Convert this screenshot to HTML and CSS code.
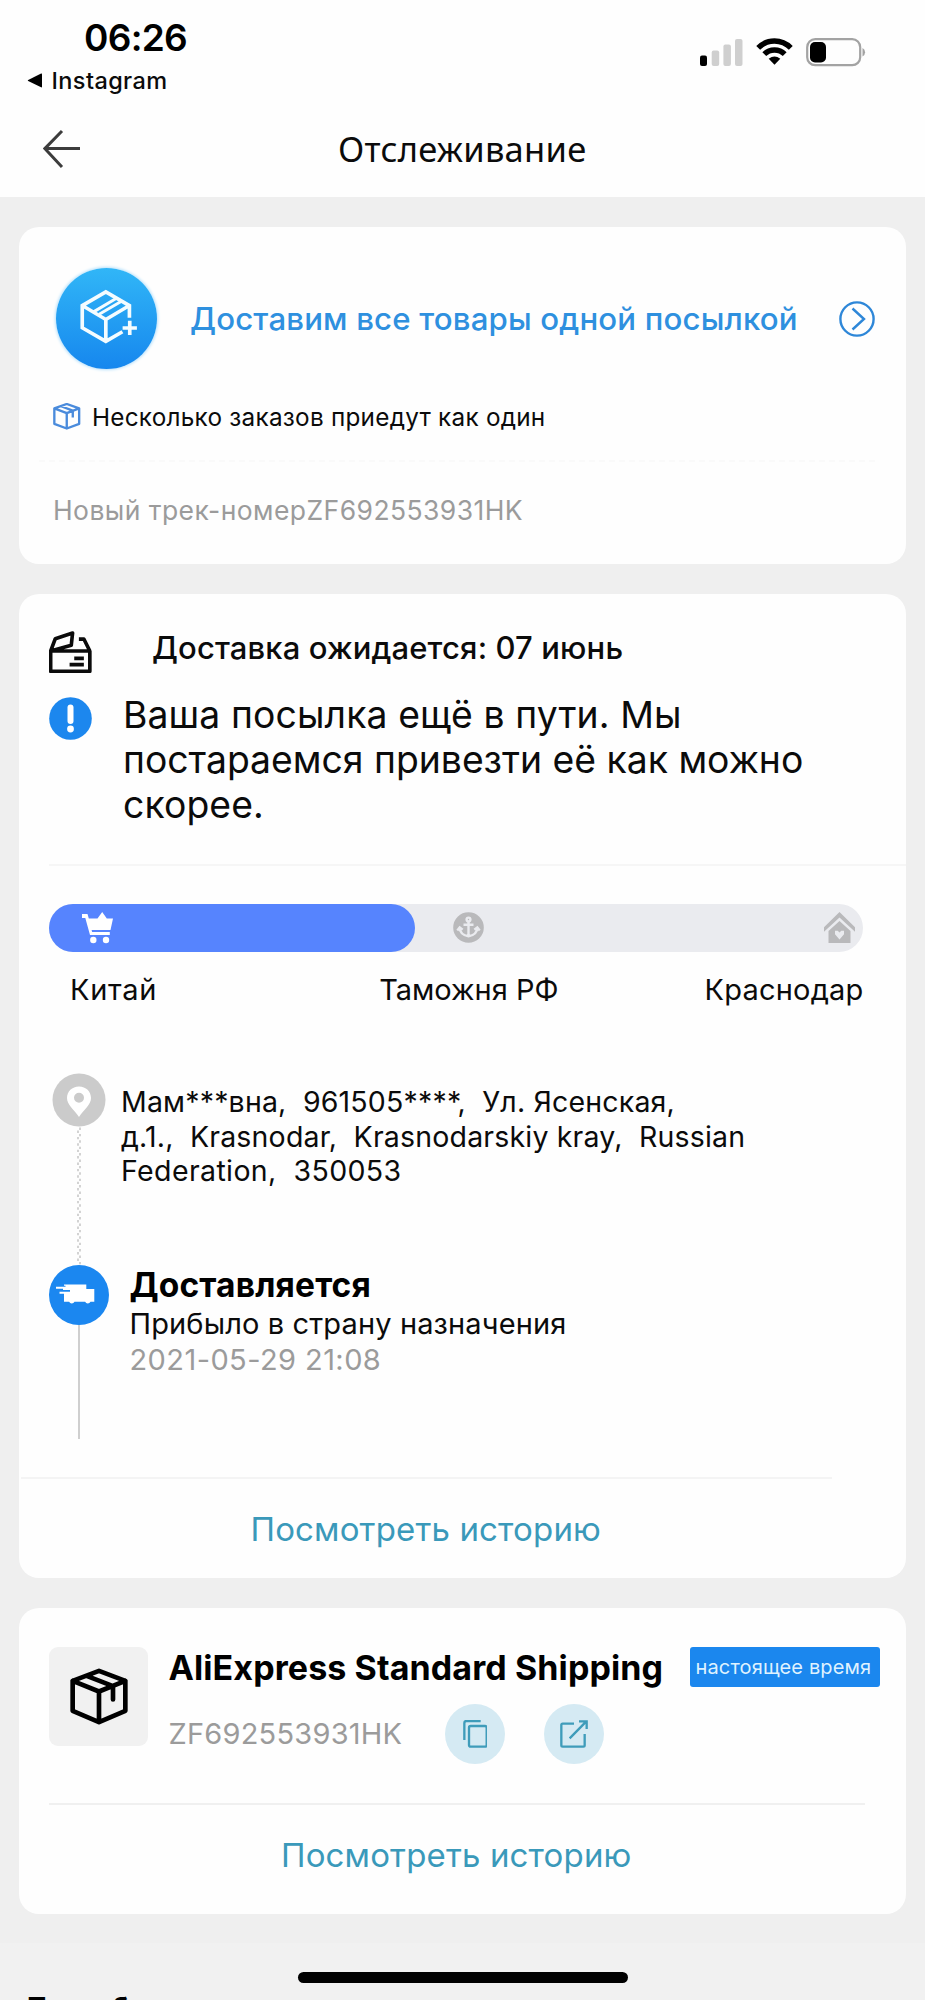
FILE: index.html
```html
<!DOCTYPE html>
<html lang="ru">
<head>
<meta charset="utf-8">
<title>Отслеживание</title>
<link rel="stylesheet" href="styles.css">
</head>
<body>
<div class="screen">
  <header class="header">
    <div class="status">
      <div class="status-left">
        <div class="clock">06:26</div>
        <div class="back-app">
          <svg class="back-tri" viewBox="0 0 16 15"><path d="M15 1.2v12.6q0 .9-.9.5L1.2 8.1q-1-.6 0-1.2L14.100.6q.9-.4.9.6z"/></svg>
          <span>Instagram</span>
        </div>
      </div>
      <div class="status-icons">
        <svg class="signal" viewBox="0 0 43 28">
          <rect x="0" y="16.500" width="7" height="10.500" rx="2"/>
          <g fill="#cfcfcf"><rect x="11.700" y="11.500" width="7.500" height="15.500" rx="2"/><rect x="23.400" y="5.500" width="7.500" height="21.500" rx="2"/><rect x="35" y="0" width="7.500" height="27" rx="2"/></g>
        </svg>
        <svg class="wifi" viewBox="0 0 37 28">
          <g fill="none" stroke="#000" stroke-width="5.400"><path d="M2.200 9.900Q9 3 18.500 3t16.300 6.900"/><path d="M8.300 16.200Q12.500 12 18.500 12t10.200 4.200"/></g>
          <path d="M12.700 20.700q5.800-4.400 11.600 0L18.500 26.700z"/>
        </svg>
        <svg class="battery" viewBox="0 0 60 29">
          <rect x="1.200" y="1.200" width="53" height="26" rx="8" fill="none" stroke="#a3a3a3" stroke-width="2.200"/>
          <rect x="4" y="4" width="16" height="20.400" rx="5"/>
          <path d="M56.500 10q2.600 1.400 2.600 4.300t-2.600 4.300z" fill="#a3a3a3"/>
        </svg>
      </div>
    </div>
    <nav class="navbar">
      <svg class="arrow" viewBox="0 0 38 40"><path d="M19 2 1.800 19.600 19 38M2 19.600h35"/></svg>
      <h1 class="title">Отслеживание</h1>
    </nav>
  </header>

  <section class="card merge">
    <div class="merge-head">
      <div class="merge-badge">
        <svg viewBox="170 175 304 304">
          <path d="M391 325v-37l-71-41-71 41v67l71 41 50-29M249 288l71 42 71-42M320 330v66"/>
          <path class="thin" d="M283 307l69-41M300 314l67-39"/>
          <path d="M392 334v43M370.500 355.500h43"/>
        </svg>
      </div>
      <div class="merge-title">Доставим все товары одной посылкой</div>
      <svg class="chevron" viewBox="0 0 36 36"><circle cx="18" cy="18" r="16.600"/><path d="M13.500 7.500 25 18 13.500 28.500"/></svg>
    </div>
    <div class="merge-note">
      <svg class="mini-box" viewBox="158 582 82 79"><path d="M199 585l37 13v46l-37 14-37-14v-46zM162 598l37 14 37-14M199 612v46M180 591l37 14v20"/></svg>
      <span>Несколько заказов приедут как один</span>
    </div>
    <div class="dashes"></div>
    <div class="merge-track">Новый трек-номерZF692553931HK</div>
  </section>

  <section class="card delivery">
    <div class="eta">
      <svg class="open-box" viewBox="147 153 128 126"><path d="M152 213h118v61H152zM152 213l14-37 52-17-4 37-62 17M237 177h15l18 36M223 235h29M209 254h43"/></svg>
      <span>Доставка ожидается: 07 июнь</span>
    </div>
    <div class="notice">
      <svg class="info" viewBox="0 0 43 43"><circle cx="21.500" cy="21.500" r="21.300" fill="#1c87ee"/><path d="M21.500 10.500v13.500" stroke="#fff" stroke-width="6" stroke-linecap="round"/><circle cx="21.500" cy="32" r="3.400" fill="#fff"/></svg>
      <p class="notice-text"><span class="l1">Ваша посылка ещё в пути. Мы</span><span class="l2">постараемся привезти её как можно</span><span class="l1">скорее.</span></p>
    </div>
    <hr class="rule rule-a">
    <div class="progress">
      <div class="progress-done">
        <svg class="cart" viewBox="0 0 31 32"><path d="M0 2h5.500l1.300 4.500h8.700L20.200 0l4.600 6.500H31L28.500 18H9.600l.5 2h17.700v3H8L3.300 6H0z"/><circle cx="11.300" cy="28" r="3.200"/><circle cx="24" cy="28" r="3.200"/></svg>
      </div>
      <svg class="anchor" viewBox="0 0 31 31"><circle cx="15.500" cy="15.500" r="15.300" fill="#b9b9bb"/><g fill="none" stroke="#eaebef" stroke-width="2.400"><circle cx="15.500" cy="7.500" r="1.900"/><path d="M15.500 9.500v15M10.500 12.800h10M6.500 15.500q.5 7.500 9 8.700 8.500-1.200 9-8.700M4.300 18.400l2.400-3 3 2.200M26.700 18.400l-2.400-3-3 2.200"/></g></svg>
      <svg class="house" viewBox="0 0 31 31"><path d="M15.500 0 31 15.200v4.600L15.500 5.600 0 19.800v-4.600z"/><path fill-rule="evenodd" d="M15.500 9 26.500 19v12h-22V19zM15.500 27.500l4.500-5.200v-3.500h-2.700l-1.800 1.700-1.800-1.700H11v3.500z"/></svg>
    </div>
    <div class="stages"><span class="st1">Китай</span><span class="st2">Таможня РФ</span><span class="st3">Краснодар</span></div>

    <div class="event address">
      <div class="rail">
        <svg class="pin" viewBox="0 0 54 54"><circle cx="27" cy="27" r="26.500" fill="#cbcbcb"/><path fill="#fff" fill-rule="evenodd" d="M27 13.500c-7 0-12 5-12 11.600C15 32 22 36.500 27 44c5-7.500 12-12 12-18.900 0-6.600-5-11.600-12-11.600zm0 6.300a5 5 0 1 1 0 10 5 5 0 0 1 0-10z"/></svg>
        <svg class="dots" viewBox="0 0 6 137"><path d="M4 0v137" stroke-dasharray="2.400 4"/><path d="M2 3v134" stroke-dasharray="2.400 4"/></svg>
      </div>
      <div class="address-text">
        <div>Мам***вна,&nbsp; 961505****,&nbsp; Ул. Ясенская,</div>
        <div>д.1.,&nbsp; Krasnodar,&nbsp; Krasnodarskiy kray,&nbsp; Russian</div>
        <div class="l3">Federation,&nbsp; 350053</div>
      </div>
    </div>
    <div class="event current">
      <div class="rail">
        <svg class="truck" viewBox="0 0 60 60"><circle cx="30" cy="30" r="30" fill="#1b87f0"/><path fill="#fff" d="M15 19.500h22.300V24h8v12.800h-3.800a3 3 0 0 1-5.400 0H25.500a3 3 0 0 1-5.400 0H15v-8h-4.500v-2H21V25H14v-1.200H7v-2h9.500v-1H15z"/></svg>
        <div class="line"></div>
      </div>
      <div class="current-text">
        <div class="event-title">Доставляется</div>
        <div class="event-sub">Прибыло в страну назначения</div>
        <div class="event-date">2021-05-29 21:08</div>
      </div>
    </div>
    <hr class="rule rule-b">
    <a class="history history-a">Посмотреть историю</a>
  </section>

  <section class="card carrier">
    <div class="carrier-main">
      <div class="tile"><svg viewBox="208 146 174 170"><path d="M295 154l79 30v90l-79 34-79-34v-90zM216 184l79 32 79-32M295 216v92M258 169l79 31v40"/></svg></div>
      <div class="carrier-info">
        <div class="carrier-top"><span class="carrier-name">AliExpress Standard Shipping</span><span class="tag">настоящее время</span></div>
        <div class="carrier-bottom">
          <span class="code">ZF692553931HK</span>
          <span class="round"><svg viewBox="70 300 74 84"><path d="M123 303H80q-6 0-6 6v51"/><rect x="88" y="318" width="53" height="62" rx="5"/></svg></span>
          <span class="round"><svg class="ext" viewBox="358 300 84 84"><path d="M400 311h-34q-4 0-4 4v61q0 4 4 4h62q4 0 4-4v-34M387 355l50-51M415 304h23v23"/></svg></span>
        </div>
      </div>
    </div>
    <hr class="rule rule-c">
    <a class="history history-b">Посмотреть историю</a>
  </section>

  <section class="details"><h2>Подробности</h2></section>
  <div class="home-bar"></div>
</div>
</body>
</html>
```

FILE: styles.css
```css
* { box-sizing: border-box; }
body { margin: 0; background: #efefef; font-family: Inter, "Liberation Sans", sans-serif; color: #0b0b0b; }
svg { display: block; flex: none; }
.screen { position: relative; width: 925px; height: 2000px; overflow: hidden; white-space: nowrap; }

.header { height: 197px; background: #fefefe; }
.status { display: flex; justify-content: space-between; height: 95px; padding: 16px 59px 0 27px; }
.clock { padding-left: 57px; font-size: 37px; line-height: 44px; font-weight: 600; letter-spacing: -.7px; color: #000; }
.back-app { display: flex; align-items: center; gap: 8.500px; margin-top: 6.500px; font-size: 23.5px; line-height: 28px; font-weight: 500; letter-spacing: .4px; }
.back-tri { width: 16px; height: 15px; }
.status-icons { display: flex; padding-top: 22px; }
.signal { width: 43px; height: 28px; margin: 1px 13px 0 0; }
.wifi { width: 37px; height: 28px; margin-right: 13px; }
.battery { width: 60px; height: 29px; }
.navbar { display: flex; align-items: center; padding: 32px 0 0 42.500px; }
.arrow { width: 38px; height: 40px; fill: none; stroke: #3c3c3c; stroke-width: 3; }
.title { margin: 0 0 0 257.500px; font: 400 34.5px/44px "Noto Sans", sans-serif; letter-spacing: .25px; }

.card { margin-left: 19px; width: 887px; background: #fefefe; border-radius: 20px; overflow: hidden; }
.rule { border: 0; height: 2px; background: #f4f4f4; margin: 0; }

.merge { margin-top: 30px; height: 337px; padding: 41px 0 0 34px; }
.merge-head { display: flex; align-items: center; height: 101px; }
.merge-badge { width: 101px; height: 101px; margin-left: 3px; border-radius: 50%; background: linear-gradient(#31b6f7, #1687ee); box-shadow: 0 0 3px 1px #b5e0fb; flex: none; }
.merge-badge svg { width: 101px; height: 101px; fill: none; stroke: #f4fcff; stroke-width: 11; }
.merge-badge .thin { stroke-width: 9; }
.merge-title { margin-left: 33px; width: 648.500px; font-size: 31.2px; line-height: 40px; font-weight: 500; letter-spacing: .16px; color: #2e90df; }
.chevron { width: 36px; height: 36px; fill: none; stroke: #2e87d8; stroke-width: 2.400; }
.merge-note { display: flex; align-items: center; gap: 11.500px; margin-top: 32.500px; font-size: 24.3px; line-height: 30px; letter-spacing: .25px; }
.mini-box { width: 27.500px; height: 26.500px; fill: none; stroke: #4a8bdc; stroke-width: 7; stroke-linejoin: round; }
.dashes { margin: 28.500px 31px 0 -14px; border-top: 2px dashed #fafafa; }
.merge-track { margin-top: 32px; font-size: 26.5px; line-height: 32px; letter-spacing: .43px; color: #9b9b9b; }

.delivery { margin-top: 30px; height: 984px; padding: 36px 0 0 30px; }
.eta { display: flex; height: 62px; font-size: 31px; line-height: 36px; font-weight: 500; letter-spacing: .13px; }
.open-box { width: 42.500px; height: 42px; margin: 1px 60.500px 0 0; fill: none; stroke: #0b0b0b; stroke-width: 11; stroke-linejoin: round; }
.notice { display: flex; height: 172px; }
.info { width: 43px; height: 43px; margin-top: 5px; }
.notice-text { margin: -.500px 0 0 31px; font-size: 37.3px; line-height: 45.4px; }
.notice-text span { display: block; }
.l1 { letter-spacing: .12px; }
.l2 { letter-spacing: 0; }
.rule-a { background: #f6f6f6; }
.progress { display: flex; align-items: center; margin-top: 38px; width: 813.500px; height: 47.500px; border-radius: 24px; background: #eaebef; }
.progress-done { display: flex; align-items: center; width: 366px; height: 100%; padding-left: 33px; border-radius: 24px; background: #5684fe; }
.cart { width: 31px; height: 32px; fill: #fff; }
.anchor { width: 31px; height: 31px; margin-left: 37.500px; }
.house { width: 31px; height: 31px; margin-left: 340px; fill: #b9b9bb; }
.stages { display: flex; justify-content: space-between; margin-top: 21.300px; width: 814.500px; padding-left: 21px; font-size: 29px; line-height: 34px; }
.st1 { letter-spacing: .7px; }
.st2 { letter-spacing: 0; margin-left: 76px; }
.st3 { letter-spacing: .2px; }
.event { display: flex; }
.rail { width: 60px; display: flex; flex-direction: column; align-items: center; flex: none; }
.address { margin-top: 66px; height: 192px; }
.pin { width: 54px; height: 54px; }
.dots { width: 6px; height: 138px; fill: none; stroke: #cfcfcf; stroke-width: 1.800; }
.address-text { margin: 12.500px 0 0 12px; font-size: 28.5px; line-height: 34.6px; letter-spacing: .18px; }
.l3 { letter-spacing: .38px; }
.current { height: 212.500px; }
.truck { width: 60px; height: 60px; }
.line { width: 1.500px; height: 114px; background: #cfcfcf; }
.current-text { margin-left: 20.500px; }
.event-title { font-size: 33.5px; line-height: 40px; font-weight: 700; letter-spacing: .15px; color: #000; }
.event-sub { margin-top: 1px; font-size: 29px; line-height: 36px; letter-spacing: .13px; }
.event-date { margin-top: .500px; font-size: 29px; line-height: 36px; letter-spacing: .42px; color: #9b9b9b; }
.rule-b { margin: 0 74px 0 -28px; }
.history { display: block; font-size: 33px; line-height: 40px; letter-spacing: .15px; color: #3a99ba; }
.history-a { margin: 29.500px 0 0 201.500px; }

.carrier { margin-top: 30px; height: 306px; padding: 39px 0 0 30px; }
.carrier-main { display: flex; height: 155.500px; }
.tile { display: flex; align-items: center; justify-content: center; width: 99px; height: 99px; border-radius: 9px; background: #f1f1f1; }
.tile svg { width: 58px; height: 57px; fill: none; stroke: #000; stroke-width: 14; stroke-linejoin: round; stroke-linecap: round; }
.carrier-info { margin-left: 20.500px; }
.carrier-top { display: flex; height: 57px; }
.carrier-name { width: 521px; font-size: 34px; line-height: 41px; font-weight: 700; letter-spacing: .1px; color: #000; }
.tag { width: 190px; height: 39.500px; padding-left: 6px; border-radius: 3px; background: #1b87ee; color: #dff2ff; font-size: 20px; line-height: 40px; letter-spacing: .14px; }
.carrier-bottom { display: flex; align-items: center; height: 60px; }
.code { width: 276.500px; font-size: 29px; line-height: 36px; letter-spacing: .22px; color: #9b9b9b; }
.round { display: flex; align-items: center; justify-content: center; width: 60px; height: 60px; margin-right: 38.800px; border-radius: 50%; background: #d5eaf3; }
.round svg { width: 24.700px; height: 28px; fill: none; stroke: #3f9cba; stroke-width: 7; }
.round .ext { width: 28px; }
.rule-c { margin-right: 41px; background: #f0f0f0; }
.history-b { margin: 30.500px 0 0 232px; }

.details { height: 57px; margin-top: 29px; padding: 47px 27px 0; background: #f1f1f1; }
.details h2 { margin: 0; font-size: 26.5px; line-height: 34px; font-weight: 700; letter-spacing: -.3px; color: #000; }
.home-bar { position: absolute; left: 297.500px; bottom: 17px; width: 330.500px; height: 11px; border-radius: 6px; background: #000; }
```
